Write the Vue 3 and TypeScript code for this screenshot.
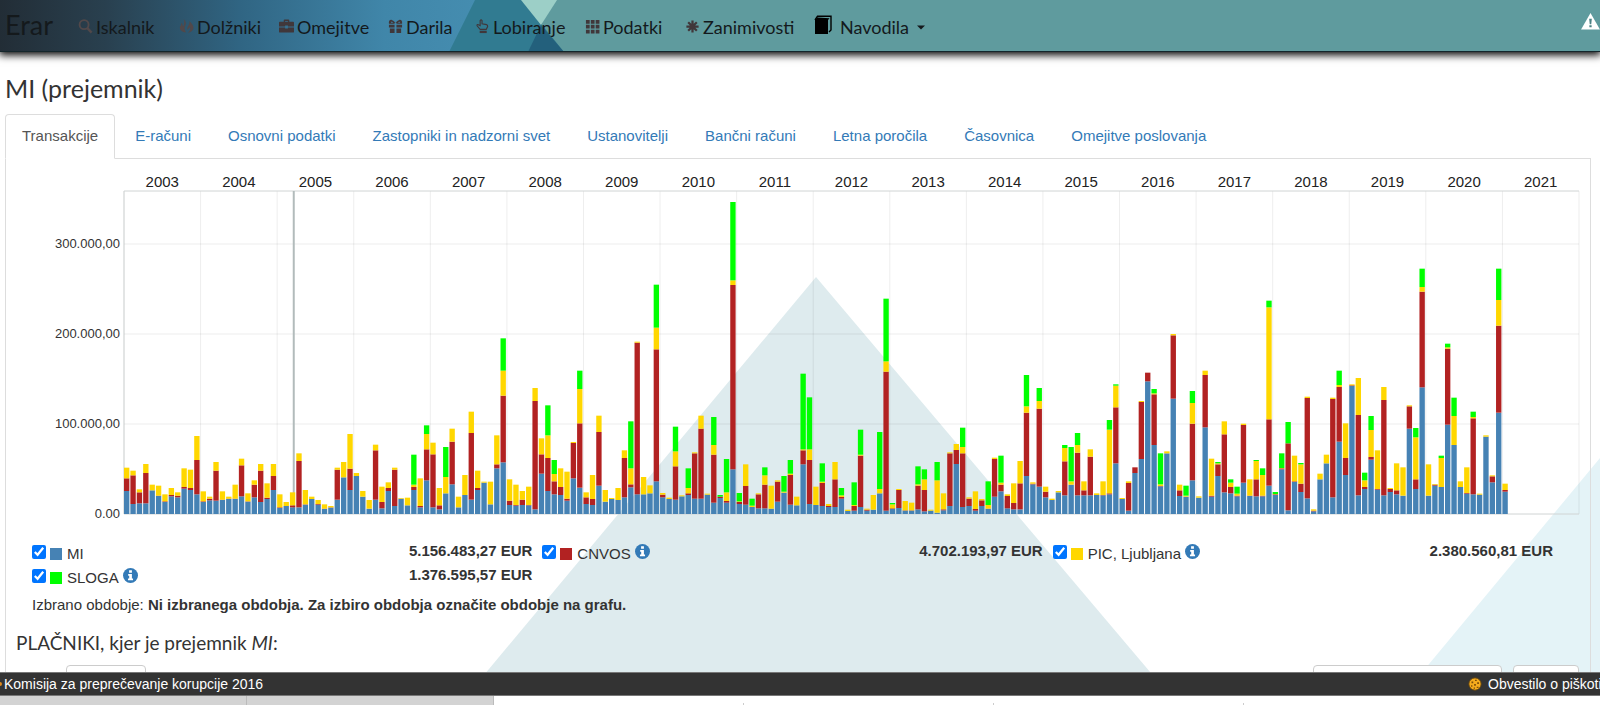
<script setup lang="ts">
import { ref } from 'vue'

interface NavItem { label: string; icon: string }
interface Series { name: string; color: string; total: string; info: boolean }

const nav: NavItem[] = [
  { label: 'Iskalnik', icon: 'search' },
  { label: 'Dolžniki', icon: 'fire' },
  { label: 'Omejitve', icon: 'briefcase' },
  { label: 'Darila', icon: 'gift' },
  { label: 'Lobiranje', icon: 'hand' },
  { label: 'Podatki', icon: 'grid' },
  { label: 'Zanimivosti', icon: 'burst' },
]

const tabs: string[] = [
  'Transakcije', 'E-računi', 'Osnovni podatki', 'Zastopniki in nadzorni svet', 'Ustanovitelji',
  'Bančni računi', 'Letna poročila', 'Časovnica', 'Omejitve poslovanja',
]
const activeTab = ref(0)

const series: Series[] = [
  { name: 'MI', color: '#4682b4', total: '5.156.483,27 EUR', info: false },
  { name: 'CNVOS', color: '#b22222', total: '4.702.193,97 EUR', info: true },
  { name: 'PIC, Ljubljana', color: '#ffd700', total: '2.380.560,81 EUR', info: true },
  { name: 'SLOGA', color: '#00ff00', total: '1.376.595,57 EUR', info: true },
]
const visible = ref<boolean[]>([true, true, true, true])

// Cumulative monthly heights per series; 270 units equal 100.000 EUR.
const months: number[][] = [
  // 2003
  [69, 107, 139], [30, 116, 130], [32, 65, 74], [32, 123, 150], [71, 71, 88], [54, 55, 85],
  [36, 38, 59], [53, 57, 78], [50, 55, 65], [76, 81, 137], [72, 78, 133], [59, 162, 234],
  // 2004
  [36, 38, 68], [41, 46, 52], [40, 130, 156], [42, 43, 68], [45, 46, 52], [45, 46, 88],
  [53, 146, 166], [37, 38, 62], [50, 88, 101], [36, 130, 150], [45, 49, 92], [72, 114, 150],
  // 2005
  [18, 20, 59], [24, 24, 36], [20, 26, 65], [20, 159, 182], [28, 29, 72], [45, 45, 52],
  [28, 30, 42], [15, 16, 29], [19, 20, 24], [43, 133, 139], [110, 110, 156], [72, 136, 240],
  // 2006
  [114, 114, 123], [52, 52, 69], [16, 16, 42], [43, 191, 208], [17, 36, 82], [69, 78, 95],
  [24, 133, 139], [46, 46, 48], [26, 26, 49], [72, 81, 88, 178], [20, 24, 107], [101, 194, 240, 266],
  // 2007
  [20, 179, 214], [14, 26, 78], [62, 62, 111, 201], [89, 217, 256], [20, 20, 52], [57, 57, 117],
  [43, 243, 307], [72, 78, 130], [94, 94, 97], [29, 29, 97], [137, 149, 236], [155, 355, 430, 527],
  // 2008
  [27, 40, 104], [25, 27, 88], [27, 43, 69], [26, 27, 82], [14, 339, 378], [121, 179, 227],
  [69, 168, 236, 326], [59, 98, 120, 162], [57, 81, 137], [40, 46, 127], [107, 213, 216], [79, 272, 375, 430],
  // 2009
  [30, 50, 65], [27, 45, 117], [85, 246, 295], [37, 37, 72], [45, 45, 48], [42, 42, 78],
  [50, 168, 191], [80, 89, 137, 278], [59, 514, 517], [59, 59, 111], [62, 62, 86], [98, 494, 559, 688],
  // 2010
  [50, 58, 63], [45, 45, 49], [43, 143, 188, 262], [53, 53, 56], [57, 62, 78, 137], [46, 182, 185],
  [46, 256, 295], [58, 58, 61], [34, 178, 207, 291], [48, 52, 52, 57], [34, 39, 65, 165], [134, 687, 701, 936],
  // 2011
  [30, 36, 38, 63], [28, 84, 149], [21, 21, 25, 46], [17, 59, 62], [17, 88, 116, 140], [16, 16, 85],
  [37, 97, 101], [64, 64, 67, 114], [28, 117, 121, 162], [26, 26, 52], [149, 191, 194, 421], [30, 162, 194, 350],
  // 2012
  [27, 27, 82], [24, 93, 97, 152], [21, 24, 30], [21, 104, 156], [46, 51, 56, 78], [9, 9, 13],
  [10, 24, 27, 95], [21, 175, 178, 253], [10, 13, 16], [13, 13, 57], [62, 62, 75, 246], [10, 427, 458, 646],
  // 2013
  [15, 17, 29, 33], [18, 72, 75], [10, 11, 39], [10, 11, 34], [14, 85, 89, 143], [8, 72, 104, 134],
  [10, 10, 13], [4, 4, 101, 156], [11, 14, 62], [24, 182, 185], [150, 192, 210], [21, 182, 201, 259],
  // 2014
  [24, 46, 50], [10, 15, 68], [24, 41, 45], [16, 16, 27, 98], [52, 165, 169], [68, 88, 94, 175],
  [17, 54, 59], [14, 33, 92], [14, 92, 159], [114, 304, 323, 417], [89, 91, 95], [82, 316, 339, 378],
  // 2015
  [50, 67, 82], [42, 42, 46], [65, 65, 69], [56, 158, 198, 207], [88, 88, 98, 201], [56, 184, 207, 243],
  [56, 71, 98], [56, 172, 194], [57, 57, 62], [56, 57, 98], [59, 62, 253, 282], [152, 320, 385, 389],
  // 2016
  [45, 45, 48], [10, 93, 98], [123, 140, 140], [165, 336, 339], [398, 424, 424], [207, 359, 362, 375],
  [83, 84, 89, 182], [182, 182, 188], [346, 536, 540], [54, 71, 88], [52, 52, 55, 85], [101, 271, 333, 369],
  // 2017
  [49, 49, 53], [260, 417, 430], [52, 55, 166], [114, 149, 152, 156], [65, 239, 278], [62, 81, 94, 104],
  [53, 55, 61, 82], [94, 267, 271], [54, 55, 104], [53, 104, 159, 162], [53, 55, 117, 137], [85, 284, 620, 640],
  // 2018
  [57, 59, 60, 66], [134, 137, 138, 182], [11, 212, 212, 276], [96, 98, 175], [66, 91, 149, 153], [47, 348, 352],
  [8, 10, 14], [104, 104, 121], [152, 152, 178], [50, 345, 349], [217, 381, 387, 430], [117, 168, 272],
  // 2019
  [384, 386, 389], [56, 297, 408], [75, 81, 101, 124], [163, 171, 252, 294], [73, 75, 191], [56, 342, 381],
  [66, 75, 78], [59, 71, 152], [55, 55, 140], [256, 323, 326], [75, 104, 230, 258], [380, 667, 681, 736],
  // 2020
  [55, 55, 149], [85, 88, 90], [81, 81, 168, 175], [268, 496, 500, 511], [207, 207, 294, 349], [81, 81, 98],
  [61, 63, 140], [59, 287, 291, 307], [58, 58, 61], [232, 232, 236], [95, 113, 116], [304, 565, 642, 736],
  // 2021
  [67, 72, 91],
]

const years: number[] = Array.from({ length: 19 }, (_, i) => 2003 + i)
const yTicks: string[] = ['0.00', '100.000,00', '200.000,00', '300.000,00']
const plotHeight = 969

function segments(tops: number[]) {
  let base = 0
  return tops.map((top, i) => {
    const size = top - (i ? tops[i - 1] : 0)
    const height = visible.value[i] ? size : 0
    base += height
    return { y: plotHeight - base, height, color: series[i].color }
  })
}
</script>

<template>
  <div class="page">
    <svg class="backdrop" viewBox="0 0 1600 705" preserveAspectRatio="none" aria-hidden="true">
      <path d="M816 277 459 705H1178Z" fill="#deebee" />
      <path d="M1600 458V705H1395Z" fill="#e4f3f7" />
    </svg>

    <header class="topbar">
      <svg class="topbar-art" width="1600" height="52" aria-hidden="true">
        <defs>
          <linearGradient id="night" x1="0" y1="0" x2="1" y2="0">
            <stop offset="0" stop-color="#222d36" />
            <stop offset=".22" stop-color="#29404f" />
            <stop offset=".5" stop-color="#306583" />
            <stop offset=".8" stop-color="#4086a9" />
            <stop offset="1" stop-color="#458db0" />
          </linearGradient>
        </defs>
        <path d="M0 0H480V52H0Z" fill="url(#night)" />
        <path d="M475 0H522L564 52H449Z" fill="#317b91" />
        <path d="M521 0H557L541 25Z" fill="#9ccfc7" />
        <path d="M541 25 564 52H528Z" fill="#23607c" />
      </svg>
      <a class="brand" href="#">Erar</a>
      <nav class="menu">
        <a v-for="item in nav" :key="item.label" href="#" class="menu-link">
          <svg class="icon" viewBox="0 0 16 16" aria-hidden="true">
            <g v-if="item.icon === 'search'" fill="none" stroke="#51484a" stroke-width="2">
              <circle cx="6.500" cy="6" r="4.800" /><path d="M10 9.800 14.500 14.500" stroke-width="2.600" />
            </g>
            <path v-else-if="item.icon === 'fire'" fill="#51484a" d="M5 0C8.500 4 7.500 6 6.300 8c-.7 1.600-.2 3.500 1.200 6.500C3 14 .3 11.500 1 8.500 1.500 7 2.600 6.500 2.300 4 4 5 4 7 4.200 8 5.800 6 6 4 5 0ZM11 2c3.500 3.500 5.300 6 4 9-.7 1.800-2.600 3.300-5.600 3.800 2.500-2.800 3-4.300 2-6.300-.6 1.500-1.300 2-2.600 3C8 8 12 6.500 11 2Z" />
            <path v-else-if="item.icon === 'briefcase'" fill="currentColor" fill-rule="evenodd" d="M5 3V1.500Q5 .5 6 .5h4q1 0 1 1V3h4q1 0 1 1v4H9.500V7h-3v1H0V4q0-1 1-1ZM6.500 2v1h3V2ZM0 9h6.500v1h3V9H16v4.500q0 1-1 1H1q-1 0-1-1Z" />
            <path v-else-if="item.icon === 'gift'" fill="currentColor" fill-rule="evenodd" d="M1 5C.5 2 2 .5 4 1q2 .5 4 3 2-2.500 4-3c2-.5 3.500 1 3 4H9V4H7v1Zm2-2L3.500 4H5.500Q4.500 2.500 3 3Zm7.500 1h2L13 3q-1-.5-2.500 1ZM1 6h6v3H1Zm8 0h6v3H9ZM2 10h5v5H2Zm7 0h5v5H9Z" />
            <g v-else-if="item.icon === 'hand'">
              <path fill="none" stroke="currentColor" stroke-width="1.200" d="M5.500 11 2.400 7.500q-.8-1.300.6-1.600L5.500 7V1.600q1-1.300 2 0V5l4.800 1q1.400.4 1.200 2L12 11Z" />
              <path fill="currentColor" d="M5 12.500h7.500V15H5Z" />
            </g>
            <path v-else-if="item.icon === 'grid'" fill="currentColor" d="M1 1h4v4H1Zm5.200 0h4v4h-4Zm5.200 0h4v4h-4ZM1 6.200h4v4H1Zm5.200 0h4v4h-4Zm5.200 0h4v4h-4ZM1 11.400h4v4H1Zm5.200 0h4v4h-4Zm5.200 0h4v4h-4Z" />
            <g v-else stroke="currentColor" stroke-width="2.400" fill="currentColor">
              <circle cx="8" cy="8" r="3" stroke="none" />
              <path d="M8 1.500v13M1.500 8h13M3.400 3.400l9.200 9.200M12.600 3.400l-9.200 9.200" />
            </g>
          </svg>
          <span>{{ item.label }}</span>
        </a>
        <a href="#" class="menu-link guide">
          <svg class="book" viewBox="0 0 18 20" aria-hidden="true">
            <path d="M1 5h13v14H1Z" fill="#000" />
            <path d="M1 5 3.500 1.300H17V15l-2 2" fill="none" stroke="#000" stroke-width="1.400" />
            <path d="M1 5 3.500 2.500 15.500 3.300 14 5Z" fill="#000" />
          </svg>
          <span>Navodila</span>
          <svg class="caret" viewBox="0 0 8 5" aria-hidden="true"><path d="M0 .5h8L4 4.500Z" fill="currentColor" /></svg>
        </a>
      </nav>
      <a class="warning" href="#" aria-label="Opozorilo">
        <svg viewBox="0 0 20 18" aria-hidden="true">
          <path d="M10 0 20 17.500H0Z" fill="#fff" />
          <path d="M8.600 6h2.800L10.800 12H9.200ZM8.800 13h2.400v2.200H8.800Z" fill="#4b8285" />
        </svg>
      </a>
    </header>

    <main class="content">
      <h1>MI (prejemnik)</h1>
      <ul class="tabs">
        <li v-for="(tab, i) in tabs" :key="tab">
          <a href="#" :class="{ active: activeTab === i }" @click.prevent="activeTab = i">{{ tab }}</a>
        </li>
      </ul>

      <section class="pane">
        <div class="chart">
          <div class="years"><span v-for="year in years" :key="year">{{ year }}</span></div>
          <div class="y-axis"><span v-for="tick in yTicks" :key="tick">{{ tick }}</span></div>
          <svg class="plot" :viewBox="`0 0 228 ${plotHeight}`" preserveAspectRatio="none" role="img" aria-label="Transakcije po mesecih">
            <g class="gridlines">
              <path v-for="n in 20" :key="'v' + n" :d="`M${(n - 1) * 12} 0V${plotHeight}`" />
              <path v-for="n in 3" :key="'h' + n" :d="`M0 ${plotHeight - n * 270}H228`" />
            </g>
            <path class="frame" :d="`M0 ${plotHeight}V0H228M0 ${plotHeight}H228`" />
            <path class="cursor" :d="`M26.600 0V${plotHeight}`" />
            <g v-for="(tops, m) in months" :key="m">
              <rect v-for="(s, i) in segments(tops)" :key="i" :x="m" :y="s.y" width=".84" :height="s.height" :fill="s.color" />
            </g>
          </svg>
        </div>

        <ul class="legend">
          <li v-for="(s, i) in series" :key="s.name">
            <label>
              <input v-model="visible[i]" type="checkbox" />
              <span class="swatch" :style="{ background: s.color }"></span>
              <span>{{ s.name }}</span>
            </label>
            <svg v-if="s.info" class="info" viewBox="0 0 16 16" aria-hidden="true">
              <circle cx="8" cy="8" r="8" fill="#337ab7" />
              <path d="M6.500 2.500h3v2.600h-3ZM5.500 6.300h4v4.900h1.200v1.900H5.300v-1.900h1.300V8.200H5.500Z" fill="#fff" />
            </svg>
            <strong>{{ s.total }}</strong>
          </li>
        </ul>

        <p class="period">Izbrano obdobje: <strong>Ni izbranega obdobja. Za izbiro obdobja označite obdobje na grafu.</strong></p>
        <h2>PLAČNIKI, kjer je prejemnik <em>MI</em>:</h2>
        <div class="controls">
          <select class="length" aria-label="Število zapisov"></select>
          <input class="filter" type="text" aria-label="Iskanje" />
          <button class="export" type="button" aria-label="Izvoz"></button>
        </div>
      </section>
    </main>

    <footer class="footer">
      <span class="dot"></span>
      <span>Komisija za preprečevanje korupcije 2016</span>
      <a class="cookies" href="#">
        <svg viewBox="0 0 16 16" aria-hidden="true">
          <circle cx="8" cy="8" r="7" fill="#f5ab1d" stroke="#6e4a0c" />
          <path d="M4 5h2v2H4ZM8 3h2v1.500H8ZM10.500 6h2v2h-2ZM7 8h2v2H7ZM3.500 9.500H5V11H3.500ZM10 11h2v1.500h-2ZM6.500 12H8v1.500H6.500Z" fill="#7b4d0b" />
        </svg>
        <span>Obvestilo o piškotih</span>
      </a>
    </footer>
    <div class="strip"><span class="cell filled"></span><span class="cell filled"></span><span class="cell"></span><span class="cell"></span><span class="cell"></span></div>
  </div>
</template>

<style>
body { margin: 0; }
</style>

<style scoped>
.page {
  position: relative;
  display: flex;
  flex-direction: column;
  height: 100vh;
  overflow: hidden;
  background: #fff;
  color: #333;
  font: 15px/24px "Liberation Sans", Arial, sans-serif;
}
a { color: inherit; text-decoration: none; }
ul { list-style: none; margin: 0; padding: 0; }
.backdrop { position: absolute; inset: 0; width: 100%; height: 100%; }

.topbar {
  position: relative;
  z-index: 1;
  flex: none;
  display: flex;
  height: 51px;
  background: #5f9b9e;
  border-bottom: 1px solid #14262b;
  box-shadow: 0 2px 8px 1px #000;
  color: #14191c;
  font-family: Lato, "Open Sans", sans-serif;
}
.topbar-art { position: absolute; left: 0; top: 0; height: 51px; }
.brand { position: relative; width: 73px; padding-left: 5px; box-sizing: border-box; font-size: 27px; line-height: 50px; }
.menu {
  position: relative;
  display: grid;
  grid-template-columns: 101px 100px 109px 87px 110px 100px 129px auto;
  padding-left: 5px;
  font-size: 18px;
  line-height: 54px;
}
.menu-link { display: flex; align-items: flex-start; gap: 3px; white-space: nowrap; }
.icon { width: 15px; height: 15px; margin-top: 19px; color: #40373a; }
.book { width: 18px; height: 20px; margin-top: 15px; }
.guide { gap: 8px; }
.caret { width: 8px; height: 5px; margin-top: 25px; }
.warning { position: relative; margin-left: auto; width: 19px; padding-top: 13px; line-height: 0; }
.warning svg { width: 19px; height: 17px; }

.content { position: relative; flex: 1; min-height: 0; overflow: hidden; padding: 20px 9px 0 5px; }
h1 { margin: 0 0 10px; font: 400 25px/32px Lato, "Open Sans", sans-serif; }
.tabs { display: flex; position: relative; margin-bottom: -1px; gap: 3px; }
.tabs a { display: block; padding: 9px 16px 11px; line-height: 23px; border: 1px solid transparent; border-radius: 4px 4px 0 0; color: #337ab7; white-space: nowrap; }
.tabs a.active { color: #555; background: #fff; border-color: #ddd #ddd #fff; }
.pane { border: 1px solid #ddd; height: 700px; box-sizing: border-box; }

.chart { display: grid; grid-template-columns: 114px 1fr; grid-template-rows: 32px 323px; column-gap: 4px; margin-right: 11px; }
.years { grid-column: 2; display: flex; align-items: flex-end; line-height: 18px; color: #222; }
.years span { flex: 1; text-align: center; }
.y-axis { display: flex; flex-direction: column-reverse; gap: 72px; margin-bottom: -9px; font-size: 13px; line-height: 18px; text-align: right; }
.plot { width: 100%; height: 323px; overflow: visible; }
.gridlines path { stroke: #000; stroke-opacity: .07; vector-effect: non-scaling-stroke; fill: none; }
.frame { stroke: #d0d4d4; vector-effect: non-scaling-stroke; fill: none; }
.cursor { stroke: #b2bbbb; stroke-width: 2px; vector-effect: non-scaling-stroke; }

.legend { display: grid; grid-template-columns: repeat(3, 1fr); column-gap: 10px; margin: 25px 37px 0 26px; }
.legend li { display: flex; align-items: flex-start; height: 24px; }
.legend label { display: flex; align-items: center; height: 30px; }
.legend input { align-self: flex-start; width: 14px; height: 14px; margin: 6px 4px 0 0; }
.swatch { width: 12px; height: 12px; margin-right: 5px; }
.info { width: 15px; height: 15px; margin: 5px 0 0 4px; }
.legend strong { margin-left: auto; }

.period { margin: 6px 26px 0; }
h2 { margin: 14px 10px 0; font: 400 19px/24px Lato, "Open Sans", sans-serif; }
.controls { display: flex; margin: 10px 11px 0 60px; }
.controls > * { box-sizing: border-box; height: 34px; background: #fff; border: 1px solid #ccc; border-radius: 4px; }
.length { width: 80px; appearance: none; }
.filter { width: 189px; margin: 0 11px 0 auto; }
.export { width: 66px; }

.footer { position: relative; flex: none; display: flex; align-items: center; height: 22px; background: #333; color: #fff; border: solid #777; border-width: 1px 0; font-size: 14px; overflow: hidden; white-space: nowrap; }
.dot { width: 2px; height: 4px; margin-right: 2px; background: #e08a1c; border-radius: 0 2px 2px 0; }
.cookies { display: flex; align-items: center; gap: 6px; width: 132px; margin-left: auto; }
.cookies svg { flex: none; width: 14px; height: 14px; }
.strip { position: relative; flex: none; display: flex; height: 9px; background: #fff; }
.cell { width: 250px; box-sizing: border-box; background: linear-gradient(#ccc, #ccc) right bottom / 1px 2px no-repeat; }
.cell.filled { width: 247px; background: #d3d3d3; border-right: 1px solid #bbb; }
</style>
